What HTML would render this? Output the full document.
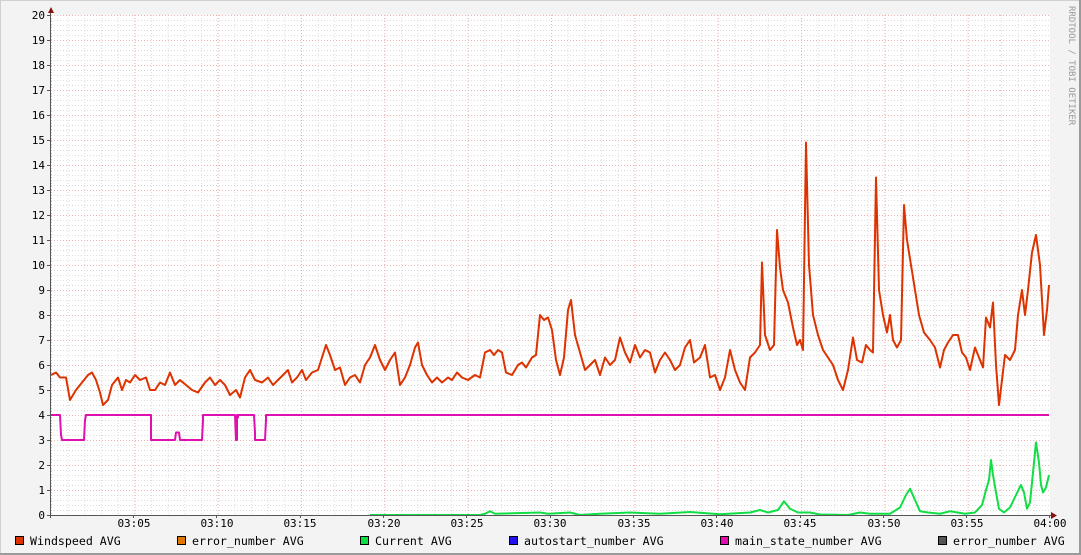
<!DOCTYPE html>
<html><head><meta charset="utf-8"><style>
html,body{margin:0;padding:0;width:1081px;height:555px;overflow:hidden;background:#f3f3f3}
svg{display:block}
text{font-family:"DejaVu Sans Mono","Liberation Mono",monospace;font-size:11px;fill:#000}
.lg{font-size:11.6px}
</style></head><body>
<svg width="1081" height="555" viewBox="0 0 1081 555">
<defs>
<pattern id="mh" x="0" y="15" width="1000" height="5" patternUnits="userSpaceOnUse"><line x1="0" y1="0.5" x2="1000" y2="0.5" stroke="#dcdcdc" stroke-dasharray="1,2"/></pattern>
<pattern id="mv" x="51" y="0" width="16.6667" height="600" patternUnits="userSpaceOnUse"><line x1="0.5" y1="0" x2="0.5" y2="600" stroke="#dcdcdc" stroke-dasharray="1,2"/></pattern>
<pattern id="Mh" x="0" y="15" width="1000" height="25" patternUnits="userSpaceOnUse"><line x1="0" y1="0.5" x2="1000" y2="0.5" stroke="#f0b0b0" stroke-dasharray="1,2"/></pattern>
<pattern id="Mv" x="51" y="0" width="83.333" height="600" patternUnits="userSpaceOnUse"><line x1="0.5" y1="0" x2="0.5" y2="600" stroke="#f0b0b0" stroke-dasharray="1,2"/></pattern>
</defs>
<rect x="0.5" y="0.5" width="1079" height="553" fill="#f3f3f3" stroke="#d0d0d0"/>
<line x1="0" y1="554" x2="1081" y2="554" stroke="#9a9a9a" stroke-width="2"/>
<line x1="1080" y1="0" x2="1080" y2="555" stroke="#9a9a9a" stroke-width="2"/>
<rect x="51" y="15" width="999" height="500" fill="#fff"/>
<rect x="51" y="15" width="999" height="500" fill="url(#mh)"/>
<rect x="51" y="15" width="999" height="500" fill="url(#mv)"/>
<rect x="51" y="15" width="999" height="500" fill="url(#Mh)"/>
<rect x="51" y="15" width="999" height="500" fill="url(#Mv)"/>
<g text-anchor="end">
<text x="45" y="19">20</text><text x="45" y="44">19</text><text x="45" y="69">18</text><text x="45" y="94">17</text><text x="45" y="119">16</text><text x="45" y="144">15</text><text x="45" y="169">14</text><text x="45" y="194">13</text><text x="45" y="219">12</text><text x="45" y="244">11</text><text x="45" y="269">10</text><text x="45" y="294">9</text><text x="45" y="319">8</text><text x="45" y="344">7</text><text x="45" y="369">6</text><text x="45" y="394">5</text><text x="45" y="419">4</text><text x="45" y="444">3</text><text x="45" y="469">2</text><text x="45" y="494">1</text><text x="45" y="519">0</text>
</g>
<g text-anchor="middle">
<text x="134" y="527">03:05</text><text x="217" y="527">03:10</text><text x="300" y="527">03:15</text><text x="384" y="527">03:20</text><text x="467" y="527">03:25</text><text x="550" y="527">03:30</text><text x="634" y="527">03:35</text><text x="717" y="527">03:40</text><text x="800" y="527">03:45</text><text x="884" y="527">03:50</text><text x="967" y="527">03:55</text><text x="1050" y="527">04:00</text>
</g>
<text transform="translate(1069,6) rotate(90)" style="font-size:9px;fill:#999">RRDTOOL / TOBI OETIKER</text>
<g transform="translate(0,515) scale(1,-25)" fill="none" stroke-width="2" stroke-linejoin="round">
<polyline vector-effect="non-scaling-stroke" points="51,4 60,4 61,3.2 62,3 84,3 85,3.8 86,4 151,4 151,3 175,3 176,3.3 179,3.3 180,3 202,3 203,3.8 203,4 235,4 236,3 237,3 237,4 238,3.9 238,4 254,4 255,3.3 255,3 265,3 266,3.8 266,4 1049,4" style="stroke:#e010b0"/>
<polyline vector-effect="non-scaling-stroke" points="370,0 480,0 485,0.05 490,0.15 495,0.05 540,0.1 548,0.05 570,0.1 580,0 600,0.05 630,0.1 660,0.05 690,0.12 720,0.03 750,0.1 760,0.2 768,0.1 778,0.2 784,0.55 790,0.25 798,0.1 810,0.1 820,0.02 848,0 860,0.1 870,0.05 890,0.05 900,0.3 906,0.8 910,1.05 915,0.6 920,0.15 928,0.1 940,0.05 950,0.15 965,0.05 975,0.1 982,0.4 986,1 989,1.4 991,2.2 993,1.6 996,0.9 999,0.25 1004,0.1 1010,0.3 1016,0.8 1021,1.2 1024,0.9 1027,0.25 1030,0.5 1033,1.7 1036,2.9 1039,2.1 1041,1.2 1043,0.9 1046,1.1 1049,1.6" style="stroke:#11dd44"/>
<polyline vector-effect="non-scaling-stroke" points="51,5.6 56,5.7 60,5.5 66,5.5 70,4.6 76,5.0 82,5.3 88,5.6 92,5.7 96,5.4 100,4.9 103,4.4 108,4.6 112,5.2 118,5.5 122,5.0 126,5.4 130,5.3 135,5.6 140,5.4 146,5.5 150,5.0 155,5.0 160,5.3 165,5.2 170,5.7 175,5.2 180,5.4 186,5.2 192,5.0 198,4.9 205,5.3 210,5.5 215,5.2 220,5.4 225,5.2 230,4.8 236,5.0 240,4.7 245,5.5 250,5.8 255,5.4 262,5.3 268,5.5 273,5.2 278,5.4 283,5.6 288,5.8 292,5.3 297,5.5 302,5.8 306,5.4 312,5.7 318,5.8 322,6.3 326,6.8 330,6.4 335,5.8 340,5.9 345,5.2 350,5.5 355,5.6 360,5.3 365,6.0 370,6.3 375,6.8 380,6.2 385,5.8 390,6.2 395,6.5 400,5.2 405,5.5 410,6.0 415,6.7 418,6.9 422,6.0 427,5.6 432,5.3 437,5.5 442,5.3 448,5.5 452,5.4 457,5.7 462,5.5 468,5.4 475,5.6 480,5.5 485,6.5 490,6.6 494,6.4 498,6.6 502,6.5 506,5.7 512,5.6 518,6.0 522,6.1 526,5.9 532,6.3 536,6.4 540,8.0 544,7.8 548,7.9 552,7.4 556,6.2 560,5.6 564,6.3 568,8.2 571,8.6 575,7.2 580,6.5 585,5.8 590,6.0 595,6.2 600,5.6 605,6.3 610,6.0 615,6.2 620,7.1 625,6.5 630,6.1 635,6.8 640,6.3 645,6.6 650,6.5 655,5.7 660,6.2 665,6.5 670,6.2 675,5.8 680,6.0 685,6.7 690,7.0 694,6.1 700,6.3 705,6.8 710,5.5 715,5.6 720,5.0 725,5.5 730,6.6 735,5.8 740,5.3 745,5.0 750,6.3 755,6.5 760,6.8 762,10.1 765,7.2 770,6.6 774,6.8 777,11.4 780,9.9 783,9.0 788,8.5 793,7.5 797,6.8 800,7.0 803,6.6 806,14.9 809,10.0 813,8.0 818,7.2 823,6.6 828,6.3 833,6.0 838,5.4 843,5.0 848,5.8 853,7.1 857,6.2 862,6.1 866,6.8 870,6.6 873,6.5 876,13.5 879,9.0 883,8.0 887,7.3 890,8.0 893,7.0 897,6.7 901,7.0 904,12.4 907,11.0 911,10.0 915,9.0 919,8.0 924,7.3 930,7.0 935,6.7 940,5.9 944,6.6 948,6.9 953,7.2 958,7.2 962,6.5 966,6.3 970,5.8 975,6.7 980,6.2 983,5.9 986,7.9 990,7.5 993,8.5 996,6.0 999,4.4 1002,5.4 1005,6.4 1010,6.2 1015,6.6 1018,8.0 1022,9.0 1025,8.0 1028,9.0 1032,10.5 1036,11.2 1040,10.0 1044,7.2 1047,8.2 1049,9.2" style="stroke:#dd3300"/>
</g>
<line x1="50.5" y1="10" x2="50.5" y2="518" stroke="#555"/>
<line x1="47" y1="515.5" x2="1053" y2="515.5" stroke="#555"/>
<g stroke="#555">
<path d="M47 15.5h4M47 40.5h4M47 65.5h4M47 90.5h4M47 115.5h4M47 140.5h4M47 165.5h4M47 190.5h4M47 215.5h4M47 240.5h4M47 265.5h4M47 290.5h4M47 315.5h4M47 340.5h4M47 365.5h4M47 390.5h4M47 415.5h4M47 440.5h4M47 465.5h4M47 490.5h4"/>
<path d="M133.5 515v3M216.5 515v3M300.5 515v3M383.5 515v3M466.5 515v3M550.5 515v3M633.5 515v3M716.5 515v3M800.5 515v3M883.5 515v3M966.5 515v3M1049.5 515v3"/>
</g>
<path d="M48 13 L51 7 L54 13 Z" fill="#8b1010"/>
<path d="M1051 512 L1057 515.5 L1051 519 Z" fill="#8b1010"/>
<g stroke="#000" stroke-width="1">
<rect x="15.5" y="536.5" width="8" height="8" fill="#dd3300"/>
<rect x="177.5" y="536.5" width="8" height="8" fill="#e07800"/>
<rect x="360.5" y="536.5" width="8" height="8" fill="#11dd44"/>
<rect x="509.5" y="536.5" width="8" height="8" fill="#2211ee"/>
<rect x="720.5" y="536.5" width="8" height="8" fill="#e010b0"/>
<rect x="938.5" y="536.5" width="8" height="8" fill="#555"/>
</g>
<text class="lg" x="30" y="545">Windspeed AVG</text>
<text class="lg" x="192" y="545">error_number AVG</text>
<text class="lg" x="375" y="545">Current AVG</text>
<text class="lg" x="524" y="545">autostart_number AVG</text>
<text class="lg" x="735" y="545">main_state_number AVG</text>
<text class="lg" x="953" y="545">error_number AVG</text>
</svg>
</body></html>
